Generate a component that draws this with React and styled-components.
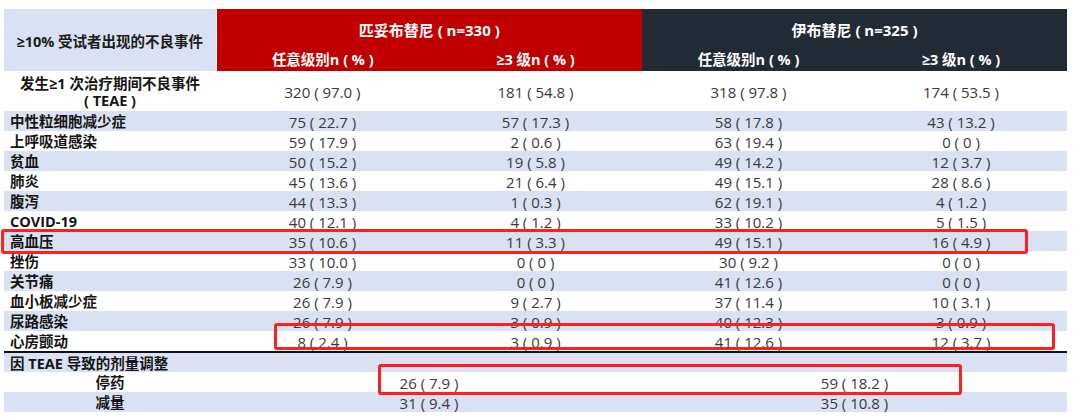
import React from 'react';
import styled, { createGlobalStyle } from 'styled-components';

const GlobalStyle = createGlobalStyle`
  body {
    margin: 0;
    background: #ffffff;
    font-family: "Open Sans", "Noto Sans CJK SC", sans-serif;
  }
`;

const rows = [
  { name: '中性粒细胞减少症', v: ['75 ( 22.7 )', '57 ( 17.3 )', '58 ( 17.8 )', '43 ( 13.2 )'] },
  { name: '上呼吸道感染', v: ['59 ( 17.9 )', '2 ( 0.6 )', '63 ( 19.4 )', '0 ( 0 )'] },
  { name: '贫血', v: ['50 ( 15.2 )', '19 ( 5.8 )', '49 ( 14.2 )', '12 ( 3.7 )'] },
  { name: '肺炎', v: ['45 ( 13.6 )', '21 ( 6.4 )', '49 ( 15.1 )', '28 ( 8.6 )'] },
  { name: '腹泻', v: ['44 ( 13.3 )', '1 ( 0.3 )', '62 ( 19.1 )', '4 ( 1.2 )'] },
  { name: 'COVID-19', v: ['40 ( 12.1 )', '4 ( 1.2 )', '33 ( 10.2 )', '5 ( 1.5 )'] },
  { name: '高血压', v: ['35 ( 10.6 )', '11 ( 3.3 )', '49 ( 15.1 )', '16 ( 4.9 )'] },
  { name: '挫伤', v: ['33 ( 10.0 )', '0 ( 0 )', '30 ( 9.2 )', '0 ( 0 )'] },
  { name: '关节痛', v: ['26 ( 7.9 )', '0 ( 0 )', '41 ( 12.6 )', '0 ( 0 )'] },
  { name: '血小板减少症', v: ['26 ( 7.9 )', '9 ( 2.7 )', '37 ( 11.4 )', '10 ( 3.1 )'] },
  { name: '尿路感染', v: ['26 ( 7.9 )', '3 ( 0.9 )', '40 ( 12.3 )', '3 ( 0.9 )'] },
  { name: '心房颤动', v: ['8 ( 2.4 )', '3 ( 0.9 )', '41 ( 12.6 )', '12 ( 3.7 )'] },
];

const doseRows = [
  { name: '停药', v: ['26 ( 7.9 )', '59 ( 18.2 )'] },
  { name: '减量', v: ['31 ( 9.4 )', '35 ( 10.8 )'] },
];

function App() {
  return (
    <Page>
      <GlobalStyle />
      <Table>
        <colgroup>
          <col style={{ width: 212 }} />
          <col style={{ width: 213 }} />
          <col style={{ width: 213 }} />
          <col style={{ width: 213 }} />
          <col style={{ width: 212 }} />
        </colgroup>
        <thead>
          <tr>
            <CornerCell rowSpan={2}>≥10% 受试者出现的不良事件</CornerCell>
            <GroupCell colSpan={2} $tone="red">匹妥布替尼 ( n=330 )</GroupCell>
            <GroupCell colSpan={2} $tone="dark">伊布替尼 ( n=325 )</GroupCell>
          </tr>
          <tr>
            <SubCell $tone="red">任意级别n ( % )</SubCell>
            <SubCell $tone="red">≥3 级n ( % )</SubCell>
            <SubCell $tone="dark">任意级别n ( % )</SubCell>
            <SubCell $tone="dark">≥3 级n ( % )</SubCell>
          </tr>
        </thead>
        <tbody>
          <TallRow>
            <LabelCell $center>
              发生≥1 次治疗期间不良事件<br />( TEAE )
            </LabelCell>
            <ValueCell>320 ( 97.0 )</ValueCell>
            <ValueCell>181 ( 54.8 )</ValueCell>
            <ValueCell>318 ( 97.8 )</ValueCell>
            <ValueCell>174 ( 53.5 )</ValueCell>
          </TallRow>
          {rows.map((r, i) => (
            <Row key={r.name} $shade={i % 2 === 0} $ruled={i === rows.length - 1}>
              <LabelCell>{r.name}</LabelCell>
              {r.v.map((x, j) => (
                <ValueCell key={j}>{x}</ValueCell>
              ))}
            </Row>
          ))}
          <Row $shade>
            <LabelCell>因 TEAE 导致的剂量调整</LabelCell>
            <ValueCell colSpan={4} />
          </Row>
          {doseRows.map((r, i) => (
            <Row key={r.name} $shade={i === 1}>
              <LabelCell $center>{r.name}</LabelCell>
              <ValueCell colSpan={2}>{r.v[0]}</ValueCell>
              <ValueCell colSpan={2}>{r.v[1]}</ValueCell>
            </Row>
          ))}
        </tbody>
      </Table>

      <Marker style={{ left: 1, top: 229, width: 1027, height: 25 }} />
      <Marker style={{ left: 274, top: 323, width: 781, height: 27 }} />
      <Marker style={{ left: 378, top: 364, width: 584, height: 31 }} />
    </Page>
  );
}

export default App;

const Page = styled.div`
  position: relative;
  width: 1080px;
  height: 420px;
  padding: 9px 0 0 4px;
  box-sizing: border-box;
  overflow: hidden;
`;

const Table = styled.table`
  width: 1063px;
  table-layout: fixed;
  border-collapse: collapse;
  border-spacing: 0;
`;

const CornerCell = styled.th`
  background: #d9e1f2;
  color: #1c1c1c;
  font-size: 14.5px;
  font-weight: 700;
  text-align: center;
  padding: 0;
  border-right: 1px solid #ffffff;
`;

const GroupCell = styled.th`
  background: ${(p) => (p.$tone === 'red' ? '#c00000' : '#222a35')};
  color: #ffffff;
  font-size: 15px;
  font-weight: 700;
  height: 41px;
  padding: 0;
  text-align: center;
  vertical-align: middle;
`;

const SubCell = styled.th`
  background: ${(p) => (p.$tone === 'red' ? '#c00000' : '#222a35')};
  color: #ffffff;
  font-size: 14.5px;
  font-weight: 700;
  height: 19px;
  line-height: 17px;
  padding: 0 0 2px;
  text-align: center;
  vertical-align: middle;
`;

const TallRow = styled.tr`
  height: 40px;
  background: #ffffff;
`;

const Row = styled.tr`
  height: 20px;
  background: ${(p) => (p.$shade ? '#d9e1f2' : '#ffffff')};
  border-bottom: ${(p) => (p.$ruled ? '2px solid #111111' : 'none')};
`;

const LabelCell = styled.td`
  color: #151515;
  font-size: 14.5px;
  font-weight: 700;
  line-height: 17px;
  padding: 1px 0 0 ${(p) => (p.$center ? '0' : '6px')};
  text-align: ${(p) => (p.$center ? 'center' : 'left')};
  vertical-align: middle;
  white-space: nowrap;
`;

const ValueCell = styled.td`
  color: #3a3a3a;
  font-size: 15px;
  line-height: 18px;
  padding: 2px 0 0;
  text-align: center;
  vertical-align: middle;
  white-space: nowrap;
`;

const Marker = styled.div`
  position: absolute;
  box-sizing: border-box;
  border: 3px solid #ff1f1f;
  border-radius: 3px;
  pointer-events: none;
`;
